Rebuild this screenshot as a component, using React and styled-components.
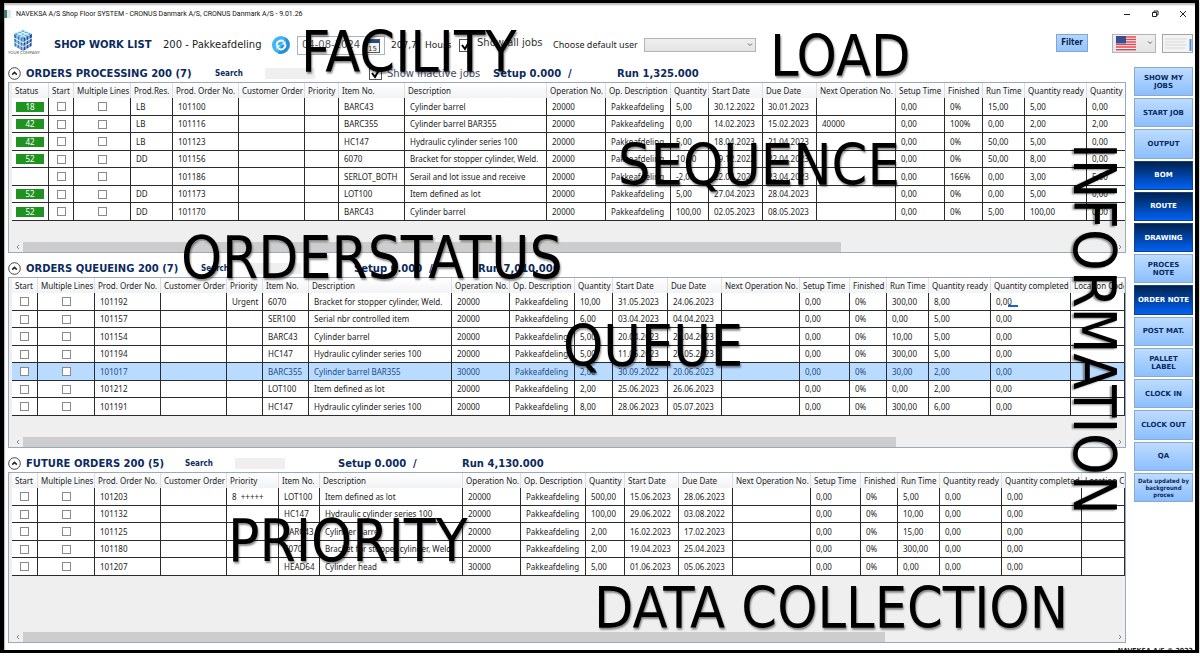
import React from "react";
import styled, { createGlobalStyle, css } from "styled-components";

const Global = createGlobalStyle`
  * { box-sizing: border-box; }
  body { margin: 0; background: #fff; color: #1c1c1c; font: 8px/12px "Noto Sans", "DejaVu Sans", sans-serif; }
  button, input, select { font: inherit; color: inherit; margin: 0; padding: 0; }
`;

const navy = "#0b2a5e";
const wide = `"DejaVu Sans", Verdana, sans-serif`;
const narrow = `"DejaVu Sans Condensed", "DejaVu Sans", sans-serif`;

const Page = styled.div`
  position: relative;
  padding-right: 1px;
`;

const Frame = styled.div`
  border: 4px solid #000;
  border-width: 3px 4px 3px 4px;
  background: #fff;
  padding: 0 2px 0 4px;
  box-shadow: inset 0 3px 2px -1px #bbb, inset 2px 0 1px -1px #bbb, 0 2px 3px rgba(0, 0, 0, 0.35);
`;

const TitleBar = styled.header`
  display: flex;
  align-items: center;
  height: 21px;
  font: 7px/12px Roboto, sans-serif;
  color: #111;
`;

const AppMark = styled.span`
  width: 7px;
  height: 8px;
  margin-right: 1px;
  margin-left: -4px;
  background: linear-gradient(90deg, #3d7f79 50%, #dfe6ea 50%);
`;

const TitleText = styled.span`
  flex: 1;
  padding-left: 4px;
`;

const WindowButtons = styled.div`
  display: flex;
  gap: 8px;
`;

const WindowButton = styled.button`
  display: grid;
  place-items: center;
  width: 20px;
  height: 16px;
  border: 0;
  background: none;
`;

const Header = styled.div`
  display: flex;
  align-items: center;
  height: 40px;
  padding-top: 2px;
  font: 9px/14px ${wide};
`;

const Logo = styled.div`
  width: 30px;
  margin-right: 16px;
  margin-top: -6px;
  svg { display: block; margin: 0 auto; }
`;

const LogoText = styled.div`
  font: 4px/4px Lato, sans-serif;
  color: #555;
  text-align: center;
  white-space: nowrap;
`;

const PageTitle = styled.h1`
  margin: 0;
  width: 109px;
  font: bold 10px/14px ${wide};
  color: ${navy};
  white-space: nowrap;
`;

const Facility = styled.span`
  width: 109px;
  font-size: 10px;
  white-space: nowrap;
`;

const Refresh = styled.button`
  width: 18px;
  height: 18px;
  margin-right: 7px;
  border: 0;
  background: none;
  svg { display: block; }
`;

const DateBox = styled.label`
  display: flex;
  align-items: center;
  justify-content: space-between;
  width: 88px;
  height: 19px;
  margin-right: 6px;
  padding: 0 4px;
  border: 1px solid #a9b4c2;
  background: #fff;
  input { width: 58px; border: 0; background: none; font-size: 10px; color: #555; }
`;

const Hours = styled.span`
  width: 34px;
`;

const CheckLabel = styled.label`
  display: flex;
  align-items: flex-start;
  gap: 5px;
  font: 10px/8px ${wide};
  color: ${(p) => p.$color || "#333"};
  white-space: nowrap;
`;

const AllJobs = styled(CheckLabel)`
  width: 94px;
`;

const InactiveJobs = styled(CheckLabel)`
  align-items: center;
  width: 124px;
  margin-left: 54px;
`;

const Tick = styled.input.attrs({ type: "checkbox" })`
  appearance: none;
  display: block;
  flex: none;
  width: ${(p) => p.$size || 9}px;
  height: ${(p) => p.$size || 9}px;
  border: 1px solid #8a8a8a;
  background: #fff;
  &:checked {
    border-color: #555;
    background: #fff url("data:image/svg+xml,%3Csvg xmlns='http://www.w3.org/2000/svg' viewBox='0 0 11 11'%3E%3Cpath d='M2 5l3 4 4-7' fill='none' stroke='%23000' stroke-width='2'/%3E%3C/svg%3E") center / 11px 11px;
  }
`;

const UserLabel = styled.label`
  display: flex;
  align-items: center;
  white-space: nowrap;
  font: 9px/14px "Noto Sans", sans-serif;
  span { width: 91px; }
`;

const SelectWrap = styled.span`
  position: relative;
  display: block;
  && { width: ${(p) => p.$w}px; }
  height: ${(p) => p.$h}px;
  > svg { position: absolute; pointer-events: none; }
  > svg.chevron { right: 3px; top: calc(50% - 2px); }
  > svg.flag { left: 4px; top: 2px; }
`;

const Select = styled.select`
  appearance: none;
  width: 100%;
  height: 100%;
  border: 1px solid #b4b4b4;
  border-radius: 0;
  background: linear-gradient(#efefef, #e4e4e4);
  color: transparent;
`;

const Tools = styled.div`
  display: flex;
  align-items: center;
  margin-left: auto;
  margin-top: -4px;
`;

const Filter = styled.button`
  width: 32px;
  height: 18px;
  margin-right: 24px;
  border: 1px solid #7fa6d6;
  background: linear-gradient(#b5d6ff, #94c4ff);
  font: bold 8px/12px ${narrow};
  color: #0a1f4a;
`;

const Preview = styled.button`
  width: 31px;
  height: 19px;
  margin-left: 6px;
  border: 1px solid #a5a5a5;
  background: #f4f4f4;
  svg { display: block; width: 100%; height: 100%; }
`;

const Body = styled.div`
  display: flex;
  gap: 8px;
`;

const Main = styled.main`
  flex: 1;
  min-width: 0;
  display: flex;
  flex-direction: column;
  gap: 6px;
`;

const SectionHead = styled.div`
  display: flex;
  align-items: center;
  height: 18px;
  padding-top: 1px;
  font: bold 10px/14px ${wide};
  color: ${navy};
  white-space: nowrap;
`;

const Collapse = styled.button`
  width: 13px;
  height: 13px;
  margin-right: 5px;
  border: 0;
  background: none;
  svg { display: block; }
`;

const SectionTitle = styled.h2`
  margin: 0;
  width: ${(p) => p.$w}px;
  font: inherit;
`;

const Search = styled.label`
  display: flex;
  align-items: center;
  font: bold 8px/12px ${narrow};
  span { width: 50px; }
  input { width: 50px; height: 11px; border: 0; background: #efefef; }
`;

const Setup = styled.span`
  width: 124px;
  margin-left: ${(p) => (p.$after ? 0 : 53)}px;
  white-space: pre;
`;

const Grid = styled.div`
  display: flex;
  flex-direction: column;
  height: 171px;
  border: 1px solid #9aa9bc;
  background: #efefef;
  overflow: hidden;
`;

const TableArea = styled.div`
  flex: 1;
  padding-left: 3px;
  overflow: hidden;
`;

const Table = styled.table`
  table-layout: fixed;
  width: 100%;
  min-width: max-content;
  border-collapse: separate;
  border-spacing: 0;
`;

const Th = styled.th`
  height: 15px;
  padding: 0 0 0 3px;
  border-right: 1px solid #dcdfe3;
  background: linear-gradient(#fff, #f2f3f5);
  font-weight: normal;
  line-height: 14px;
  text-align: left;
  white-space: nowrap;
  overflow: hidden;
`;

const Td = styled.td`
  padding: 0 0 0 ${(p) => (p.$mid ? 0 : 5)}px;
  border-right: 1px solid #2b2b2b;
  border-bottom: 1px solid #2b2b2b;
  line-height: 12px;
  white-space: pre;
  overflow: hidden;
  input { margin: 0 auto; }
`;

const Tr = styled.tr`
  height: 17px;
  background: #fff;
  &:nth-child(odd) { height: 18px; }
  ${(p) => p.$selected && css`
    background: #b9dbff;
    color: #1d4b85;
  `}
`;

const Status = styled.span`
  display: block;
  width: 28px;
  height: 10px;
  margin: 0 auto;
  background: #1f931f;
  color: #fff;
  line-height: 10px;
  text-align: center;
`;

const ScrollBar = styled.div`
  display: flex;
  align-items: center;
  height: 10px;
  padding-left: 3px;
`;

const Arrow = styled.button`
  width: 11px;
  height: 10px;
  border: 0;
  background: none;
  svg { display: block; margin: 0 auto; }
`;

const Track = styled.div`
  flex: 1;
  height: 10px;
`;

const Thumb = styled.div`
  height: 10px;
  background: #cdcdcd;
`;

const Side = styled.nav`
  display: grid;
  grid-auto-rows: 1fr;
  gap: 2px;
  width: 59px;
  height: 435px;
  margin-top: 3px;
`;

const SideButton = styled.button`
  && { padding: 0 2px; }
  border: 1px solid ${(p) => (p.$dark ? "#16407e" : "#8aa9cf")};
  background: ${(p) => (p.$dark ? "linear-gradient(#00234f, #0062f5)" : "linear-gradient(#bddcff, #8cbfff)")};
  color: ${(p) => (p.$dark ? "#fff" : navy)};
  font: bold ${(p) => (p.$small ? "6px/7px " + narrow : "7px/8px " + wide)};
`;

const Footer = styled.footer`
  height: 7px;
  padding-top: 3px;
  overflow: hidden;
  text-align: right;
  font: bold 7px/10px ${narrow};
`;

const Word = styled.span`
  position: absolute;
  left: ${(p) => p.$x}px;
  top: ${(p) => p.$y}px;
  font: ${(p) => p.$size || 57}px/56px ${narrow};
  color: #000;
  text-shadow: 1px 2px 2px rgba(0, 0, 0, 0.45);
  white-space: nowrap;
  pointer-events: none;
  ${(p) => p.$down && css`writing-mode: vertical-rl;`}
`;

const Cursor = styled.i`
  position: absolute;
  left: 1008px;
  top: 305px;
  width: 10px;
  height: 2px;
  background: #1d5fc4;
`;

const Chevron = () => (
  <svg className="chevron" width="6" height="4" viewBox="0 0 6 4"><path d="M1 .5l2 2 2-2" fill="none" stroke="#666" /></svg>
);

const rest = "Description|Operation No.|Op. Description|Quantity|Start Date|Due Date|Next Operation No.|Setup Time|Finished|Run Time|Quantity ready";

const sections = [
  {
    title: "ORDERS PROCESSING 200 (7)", w: 189, run: "Run 1,325.000", thumb: 75, inactive: true,
    cols: ("Status|Start|Multiple Lines|Prod.Res.|Prod. Order No.|Customer Order|Priority|Item No.|" + rest + "|Quantity").split("|"),
    widths: [37, 25, 57, 42, 66, 66, 34, 66, 142, 59, 65, 38, 54, 54, 79, 49, 38, 42, 62, 39],
    rows: [
      "18|[]|[]|LB|101100|||BARC43|Cylinder barrel|20000|Pakkeafdeling|5,00|30.12.2022|30.01.2023||0,00|0%|15,00|5,00|0,00",
      "42|[]|[]|LB|101116|||BARC355|Cylinder barrel BAR355|20000|Pakkeafdeling|0,00|14.02.2023|15.02.2023|40000|0,00|100%|0,00|2,00|2,00",
      "42|[]|[]|LB|101123|||HC147|Hydraulic cylinder series 100|20000|Pakkeafdeling|5,00|18.04.2023|21.04.2023||0,00|0%|50,00|5,00|0,00",
      "52|[]|[]|DD|101156|||6070|Bracket for stopper cylinder, Weld.|20000|Pakkeafdeling|10,00|19.12.2022|22.04.2023||0,00|0%|50,00|8,00|0,00",
      "|[]|[]||101186|||SERLOT_BOTH|Serail and lot issue and receive|20000|Pakkeafdeling|-2,00|22.04.2023|23.04.2023||0,00|166%|0,00|3,00|5,00",
      "52|[]|[]|DD|101173|||LOT100|Item defined as lot|20000|Pakkeafdeling|5,00|27.04.2023|28.04.2023||0,00|0%|0,00|5,00|0,00",
      "52|[]|[]|DD|101170|||BARC43|Cylinder barrel|20000|Pakkeafdeling|100,00|02.05.2023|08.05.2023||0,00|0%|5,00|100,00|0,00",
    ],
  },
  {
    title: "ORDERS QUEUEING 200 (7)", w: 175, run: "Run 7,010.000", thumb: 80, selected: 4,
    cols: ("Start|Multiple Lines|Prod. Order No.|Customer Order|Priority|Item No.|" + rest + "|Quantity completed|Location Code").split("|"),
    widths: [26, 57, 66, 66, 36, 46, 143, 58, 65, 38, 55, 54, 78, 50, 37, 42, 62, 80, 54],
    rows: [
      "[]|[]|101192||Urgent|6070|Bracket for stopper cylinder, Weld.|20000|Pakkeafdeling|10,00|31.05.2023|24.06.2023||0,00|0%|300,00|8,00|0,00|",
      "[]|[]|101157|||SER100|Serial nbr controlled item|20000|Pakkeafdeling|6,00|03.04.2023|04.04.2023||0,00|0%|0,00|5,00|0,00|",
      "[]|[]|101154|||BARC43|Cylinder barrel|20000|Pakkeafdeling|5,00|20.04.2023|21.04.2023||0,00|0%|10,00|5,00|0,00|",
      "[]|[]|101194|||HC147|Hydraulic cylinder series 100|20000|Pakkeafdeling|5,00|11.05.2023|24.05.2023||0,00|0%|300,00|5,00|0,00|",
      "[]|[]|101017|||BARC355|Cylinder barrel BAR355|30000|Pakkeafdeling|2,00|30.09.2022|20.06.2023||0,00|0%|30,00|2,00|0,00|",
      "[]|[]|101212|||LOT100|Item defined as lot|20000|Pakkeafdeling|2,00|25.06.2023|26.06.2023||0,00|0%|0,00|2,00|0,00|",
      "[]|[]|101191|||HC147|Hydraulic cylinder series 100|20000|Pakkeafdeling|8,00|28.06.2023|05.07.2023||0,00|0%|300,00|6,00|0,00|",
    ],
  },
  {
    title: "FUTURE ORDERS 200 (5)", w: 159, run: "Run 4,130.000", thumb: 79,
    cols: ("Start|Multiple Lines|Prod. Order No.|Customer Order|Priority|Item No.|" + rest + "|Quantity completed|Location Code").split("|"),
    widths: [26, 57, 66, 66, 52, 41, 143, 58, 65, 39, 54, 54, 78, 50, 37, 42, 62, 80, 43],
    rows: [
      "[]|[]|101203||8  +++++|LOT100|Item defined as lot|20000|Pakkeafdeling|500,00|15.06.2023|28.06.2023||0,00|0%|5,00|0,00|0,00|",
      "[]|[]|101132|||HC147|Hydraulic cylinder series 100|20000|Pakkeafdeling|100,00|29.06.2022|03.08.2022||0,00|0%|10,00|0,00|0,00|",
      "[]|[]|101125|||BARC43|Cylinder barrel|20000|Pakkeafdeling|2,00|16.02.2023|17.02.2023||0,00|0%|15,00|0,00|0,00|",
      "[]|[]|101180|||6070|Bracket for stopper cylinder, Weld.|20000|Pakkeafdeling|2,00|19.04.2023|25.04.2023||0,00|0%|300,00|0,00|0,00|",
      "[]|[]|101207|||HEAD64|Cylinder head|30000|Pakkeafdeling|5,00|01.06.2023|05.06.2023||0,00|0%|0,00|0,00|0,00|",
    ],
  },
];

const actions = [
  ["SHOW MY JOBS"], ["START JOB"], ["OUTPUT"], ["BOM", 1], ["ROUTE", 1], ["DRAWING", 1], ["PROCES NOTE"],
  ["ORDER NOTE", 1], ["POST MAT."], ["PALLET LABEL"], ["CLOCK IN"], ["CLOCK OUT"], ["QA"],
  ["Data updated by background proces", 0, 1],
];

const words = [
  { text: "FACILITY", x: 301, y: 24 },
  { text: "LOAD", x: 770, y: 28 },
  { text: "SEQUENCE", x: 618, y: 137 },
  { text: "ORDERSTATUS", x: 181, y: 230, size: 58 },
  { text: "QUEUE", x: 563, y: 318 },
  { text: "PRIORITY", x: 228, y: 513, size: 58 },
  { text: "DATA COLLECTION", x: 594, y: 580 },
  { text: "INFORMATION", x: 1066, y: 143, size: 59, down: true },
];

function Cell({ value, col, order }) {
  if (value === "[]") return <Td $mid><Tick aria-label={`${col} ${order}`} /></Td>;
  if (col === "Status") return <Td $mid>{value && <Status>{value}</Status>}</Td>;
  return <Td>{value}</Td>;
}

function Section({ s }) {
  const orderCol = s.cols.indexOf("Prod. Order No.");
  return (
    <section>
      <SectionHead>
        <Collapse aria-label="Collapse">
          <svg width="13" height="13" viewBox="0 0 13 13"><circle cx="6.5" cy="6.5" r="5.8" fill="#fff" stroke="#444" /><path d="M4.2 7.6l2.3-2.2 2.3 2.2" fill="none" stroke="#222" strokeWidth="1.5" /></svg>
        </Collapse>
        <SectionTitle $w={s.w}>{s.title}</SectionTitle>
        <Search><span>Search</span><input type="text" /></Search>
        {s.inactive && <InactiveJobs $color="#3d4a63"><Tick $size={13} defaultChecked />Show inactive jobs</InactiveJobs>}
        <Setup $after={s.inactive}>{"Setup 0.000  /"}</Setup>
        <span>{s.run}</span>
      </SectionHead>
      <Grid>
        <TableArea>
          <Table>
            <colgroup>{s.widths.map((w, i) => <col key={i} width={w} />)}</colgroup>
            <thead><tr>{s.cols.map((c, i) => <Th key={i}>{c}</Th>)}</tr></thead>
            <tbody>
              {s.rows.map((r, n) => {
                const cells = r.split("|");
                return (
                  <Tr key={n} $selected={s.selected === n}>
                    {cells.map((v, i) => <Cell key={i} value={v} col={s.cols[i]} order={cells[orderCol]} />)}
                  </Tr>
                );
              })}
            </tbody>
          </Table>
        </TableArea>
        <ScrollBar>
          <Arrow aria-label="Scroll left"><svg width="4" height="6" viewBox="0 0 4 6"><path d="M3 1L1 3l2 2" fill="none" stroke="#888" /></svg></Arrow>
          <Track><Thumb style={{ width: `${s.thumb}%` }} /></Track>
          <Arrow aria-label="Scroll right"><svg width="4" height="6" viewBox="0 0 4 6"><path d="M1 1l2 2-2 2" fill="none" stroke="#888" /></svg></Arrow>
        </ScrollBar>
      </Grid>
    </section>
  );
}

const CubeLogo = () => (
  <svg width="20" height="21" viewBox="0 0 20 21">
    <path d="M10 0l9 4-9 4.5L1 4z" fill="#58b4ea" />
    <path d="M1 4l9 4.500V21l-8.500-5z" fill="#2e7cc4" />
    <path d="M19 4l-9 4.500V21l8.500-5z" fill="#174f9b" />
    <path d="M4 2.700l9 4.300M7 1.300l9 4.200M16 2.700L7 7M13 1.300L4 5.500M1 8l9 4.700L19 8M1.300 12l8.700 5 8.700-5M4 5.500V17.500M7 7v12M13 7v12M16 5.500v12M10 8.500V21" stroke="#fff" strokeWidth=".9" fill="none" />
  </svg>
);

export default function App() {
  return (
    <Page>
      <Global />
      <Frame>
        <TitleBar>
          <AppMark />
          <TitleText>NAVEKSA A/S Shop Floor SYSTEM - CRONUS Danmark A/S, CRONUS Danmark A/S - 9.01.26</TitleText>
          <WindowButtons>
            <WindowButton aria-label="Minimize"><svg width="8" height="8"><path d="M1 4.500h6" stroke="#222" /></svg></WindowButton>
            <WindowButton aria-label="Restore"><svg width="8" height="8"><path d="M1.500 2.500h4v4h-4zM3 2.500v-1.500h4v4H5.500" fill="none" stroke="#222" /></svg></WindowButton>
            <WindowButton aria-label="Close"><svg width="8" height="8"><path d="M1 1l6 6M7 1L1 7" stroke="#222" /></svg></WindowButton>
          </WindowButtons>
        </TitleBar>
        <Header>
          <Logo><CubeLogo /><LogoText>YOUR COMPANY</LogoText></Logo>
          <PageTitle>SHOP WORK LIST</PageTitle>
          <Facility>200 - Pakkeafdeling</Facility>
          <Refresh aria-label="Refresh">
            <svg width="18" height="18" viewBox="0 0 18 18">
              <circle cx="9" cy="9" r="9" fill="#3fb4f2" />
              <path d="M14 1.600a9 9 0 0 1-8 15.800z" fill="#2a8fd6" />
              <path d="M4.800 10a4.300 4.300 0 0 1 7-4.300M13.200 8a4.300 4.300 0 0 1-7 4.300" fill="none" stroke="#fff" strokeWidth="1.800" />
              <path d="M13.500 4.500v4h-4zM4.500 13.500v-4h4z" fill="#fff" />
            </svg>
          </Refresh>
          <DateBox>
            <input type="text" aria-label="Date" defaultValue="04-08-2024" />
            <svg width="15" height="15" viewBox="0 0 15 15"><rect x=".5" y="1.500" width="14" height="13" fill="#f3f3f3" stroke="#555" /><path d="M1 2h13v3H1z" fill="#1e4b8c" /><text x="3" y="13" fontSize="7" fontFamily="DejaVu Sans" fill="#333">15</text></svg>
          </DateBox>
          <Hours>207,7</Hours>
          <Hours>Hours</Hours>
          <AllJobs><Tick $size={13} defaultChecked />Show all jobs</AllJobs>
          <UserLabel>
            <span>Choose default user</span>
            <SelectWrap $w={112} $h={14}><Select /><Chevron /></SelectWrap>
          </UserLabel>
          <Tools>
            <Filter>Filter</Filter>
            <SelectWrap $w={44} $h={19}>
              <Select aria-label="Language" />
              <svg className="flag" width="20" height="15" viewBox="0 0 20 15">
                <path fill="#fff" d="M0 0h20v15H0z" />
                <path d="M0 1h20M0 3.500h20M0 6h20M0 8.500h20M0 11h20M0 13.700h20" stroke="#e2454d" strokeWidth="1.400" />
                <path fill="#3a4d90" d="M0 0h10v7.500H0z" />
              </svg>
              <Chevron />
            </SelectWrap>
            <Preview aria-label="Layout">
              <svg viewBox="0 0 29 17"><path d="M2 4h22M2 7h20M2 10h22M2 13h20" stroke="#d9d9d9" /><path d="M27.500 4v12" stroke="#4a8fe0" strokeWidth="2" /></svg>
            </Preview>
          </Tools>
        </Header>
        <Body>
          <Main>{sections.map((s) => <Section key={s.title} s={s} />)}</Main>
          <Side>
            {actions.map(([t, dark, small]) => <SideButton key={t} $dark={dark} $small={small}>{t}</SideButton>)}
          </Side>
        </Body>
        <Footer>NAVEKSA A/S © 2023</Footer>
      </Frame>
      <Cursor />
      {words.map((w) => <Word key={w.text} $x={w.x} $y={w.y} $size={w.size} $down={w.down}>{w.text}</Word>)}
    </Page>
  );
}
